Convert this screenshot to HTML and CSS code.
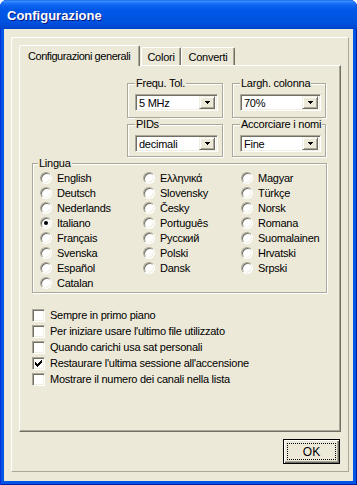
FILE: index.html
```html
<!DOCTYPE html>
<html lang="it">
<head>
<meta charset="utf-8">
<title>Configurazione</title>
<link rel="stylesheet" href="styles.css">
</head>
<body>
<div class="window">
  <div class="titlebar"><span class="title">Configurazione</span></div>
  <div class="client">
    <div class="outer">
      <div class="tabctl">
        <div class="tabstrip">
          <div class="tab active tab-general">Configurazioni generali</div>
          <div class="tab tab-colori">Colori</div>
          <div class="tab tab-converti">Converti</div>
        </div>
        <div class="tabpanel">
          <div class="settings">
            <fieldset class="group g-top">
              <legend>Frequ. Tol.</legend>
              <div class="combo"><span class="value">5 MHz</span><span class="drop"><svg width="5" height="3" viewBox="0 0 5 3"><rect x="0" y="0" width="5" height="1"/><rect x="1" y="1" width="3" height="1"/><rect x="2" y="2" width="1" height="1"/></svg></span></div>
            </fieldset>
            <fieldset class="group g-top">
              <legend>Largh. colonna</legend>
              <div class="combo"><span class="value">70%</span><span class="drop"><svg width="5" height="3" viewBox="0 0 5 3"><rect x="0" y="0" width="5" height="1"/><rect x="1" y="1" width="3" height="1"/><rect x="2" y="2" width="1" height="1"/></svg></span></div>
            </fieldset>
            <fieldset class="group g-bottom">
              <legend>PIDs</legend>
              <div class="combo"><span class="value">decimali</span><span class="drop"><svg width="5" height="3" viewBox="0 0 5 3"><rect x="0" y="0" width="5" height="1"/><rect x="1" y="1" width="3" height="1"/><rect x="2" y="2" width="1" height="1"/></svg></span></div>
            </fieldset>
            <fieldset class="group g-bottom">
              <legend>Accorciare i nomi</legend>
              <div class="combo"><span class="value">Fine</span><span class="drop"><svg width="5" height="3" viewBox="0 0 5 3"><rect x="0" y="0" width="5" height="1"/><rect x="1" y="1" width="3" height="1"/><rect x="2" y="2" width="1" height="1"/></svg></span></div>
            </fieldset>
          </div>

          <fieldset class="group lingua">
            <legend>Lingua</legend>
            <div class="radios">
              <label class="opt"><span class="radio"></span>English</label>
              <label class="opt"><span class="radio"></span>Ελληνικά</label>
              <label class="opt"><span class="radio"></span>Magyar</label>
              <label class="opt"><span class="radio"></span>Deutsch</label>
              <label class="opt"><span class="radio"></span>Slovensky</label>
              <label class="opt"><span class="radio"></span>Türkçe</label>
              <label class="opt"><span class="radio"></span>Nederlands</label>
              <label class="opt"><span class="radio"></span>Česky</label>
              <label class="opt"><span class="radio"></span>Norsk</label>
              <label class="opt"><span class="radio checked"></span>Italiano</label>
              <label class="opt"><span class="radio"></span>Português</label>
              <label class="opt"><span class="radio"></span>Romana</label>
              <label class="opt"><span class="radio"></span>Français</label>
              <label class="opt"><span class="radio"></span>Русский</label>
              <label class="opt"><span class="radio"></span>Suomalainen</label>
              <label class="opt"><span class="radio"></span>Svenska</label>
              <label class="opt"><span class="radio"></span>Polski</label>
              <label class="opt"><span class="radio"></span>Hrvatski</label>
              <label class="opt"><span class="radio"></span>Español</label>
              <label class="opt"><span class="radio"></span>Dansk</label>
              <label class="opt"><span class="radio"></span>Srpski</label>
              <label class="opt"><span class="radio"></span>Catalan</label>
            </div>
          </fieldset>

          <div class="checks">
            <label class="chk"><span class="box"></span>Sempre in primo piano</label>
            <label class="chk"><span class="box"></span>Per iniziare usare l'ultimo file utilizzato</label>
            <label class="chk"><span class="box"></span>Quando carichi usa sat personali</label>
            <label class="chk"><span class="box"><svg width="7" height="7" viewBox="0 0 7 7"><path d="M0 2h1v1h1v1h1v-1h1v-1h1v-1h1v-1h1v3h-1v1h-1v1h-1v1h-1v1h-1v-1h-1v-1h-1v-1h-1z"/></svg></span>Restaurare l'ultima sessione all'accensione</label>
            <label class="chk"><span class="box"></span>Mostrare il numero dei canali nella lista</label>
          </div>
        </div>
      </div>
      <div class="buttons">
        <button class="btn default" type="button"><span class="focus">OK</span></button>
      </div>
    </div>
  </div>
</div>
</body>
</html>
```

FILE: styles.css
```css
* { box-sizing: border-box; }

html, body {
  margin: 0;
  padding: 0;
  background: #ffffff;
}

body {
  width: 357px;
  height: 485px;
  overflow: hidden;
  font-family: "Liberation Sans", Arial, sans-serif;
  font-size: 11px;
  letter-spacing: -0.25px;
  color: #000;
}

.window {
  width: 357px;
  height: 485px;
  display: flex;
  flex-direction: column;
  background: #0055e5;
  border-radius: 7px 7px 0 0;
  box-shadow: inset 1px 0 0 #0831d9, inset -1px 0 0 #001ea0, inset 0 -1px 0 #001ea0;
}

.titlebar {
  height: 29px;
  flex: none;
  display: flex;
  align-items: center;
  padding: 2px 0 0 7px;
  border-radius: 7px 7px 0 0;
  background: linear-gradient(to bottom,
    #0a5de8 0px, #3d95ff 1px, #1c75fb 3px, #0b61ef 6px, #0058e8 10px,
    #0055e3 16px, #0052df 22px, #004bd8 26px, #0041c8 29px);
}

.title {
  font-family: "Liberation Sans", Arial, sans-serif;
  font-weight: bold;
  font-size: 13px;
  letter-spacing: 0;
  color: #fff;
  text-shadow: 1px 1px 0 #0a1883;
}

.client {
  flex: 1;
  margin: 0 4px 4px 4px;
  background: #ece9d8;
  padding: 8px 4px 9px 7px;
  display: flex;
}

.outer {
  flex: 1;
  border: 1px solid;
  border-color: #fff #aca899 #aca899 #fff;
  padding: 7px 7px 7px 7px;
  display: flex;
  flex-direction: column;
}

.tabctl {
  display: flex;
  flex-direction: column;
}

.tabstrip {
  display: flex;
  align-items: flex-end;
  height: 20px;
}

.tab {
  height: 18px;
  border: 1px solid;
  border-bottom: none;
  border-color: #fff #716f64 transparent #fff;
  box-shadow: inset -1px 0 0 #aca899;
  border-radius: 2px 2px 0 0;
  background: #ece9d8;
  display: flex;
  align-items: center;
  justify-content: center;
  padding-top: 1px;
}

.tab.active {
  height: 21px;
  margin-bottom: -1px;
  position: relative;
  z-index: 1;
  justify-content: flex-start;
  padding-left: 8px;
  padding-top: 0;
  letter-spacing: -0.45px;
}

.tab-general { width: 121px; }
.tab-colori { width: 40px; margin-left: 1px; }
.tab-converti { width: 54px; }

.tabpanel {
  height: 367px;
  border: 1px solid;
  border-color: #fff #716f64 #716f64 #fff;
  box-shadow: inset -1px -1px 0 #aca899;
  display: flex;
  flex-direction: column;
}

.group {
  margin: 0;
  padding: 0;
  min-width: 0;
  border: 1px solid #aca899;
  box-shadow: 1px 1px 0 #fff, inset 1px 1px 0 #fff;
}

.group legend {
  padding: 0 1px;
  margin-left: 0;
  line-height: 12px;
  white-space: nowrap;
  background: #ece9d8;
}

.settings {
  margin: 11px 0 0 107px;
  display: grid;
  grid-template-columns: 96px 94px;
  column-gap: 9px;
  row-gap: 0;
}

.g-top {
  padding: 5px 4px 6px 7px;
}

.g-bottom {
  padding: 5px 4px 4px 7px;
}

.combo {
  height: 17px;
  background: #fff;
  border: 1px solid;
  border-color: #aca899 #fff #fff #aca899;
  box-shadow: inset 1px 1px 0 #716f64, inset -1px -1px 0 #f1efe2;
  display: flex;
  align-items: center;
  padding: 2px 2px 2px 3px;
}

.combo .value {
  flex: 1;
  padding-top: 1px;
}

.drop {
  width: 16px;
  height: 13px;
  background: #ece9d8;
  border: 1px solid;
  border-color: #f1efe2 #716f64 #716f64 #f1efe2;
  box-shadow: inset 1px 1px 0 #fff, inset -1px -1px 0 #aca899;
  display: flex;
  align-items: center;
  justify-content: center;
}

.drop svg { display: block; fill: #000; }

.lingua {
  margin: 0 12px 0 12px;
  width: 295px;
  padding: 1px 0 2px 7px;
}

.lingua legend {
  margin-left: -2px;
}

.radios {
  display: grid;
  grid-template-columns: 103px 98px 1fr;
  grid-auto-rows: 15px;
}

.opt {
  display: flex;
  align-items: center;
  gap: 5px;
  white-space: nowrap;
}

.radio {
  width: 12px;
  height: 12px;
  flex: none;
  border-radius: 50%;
  background: #fff;
  border: 1px solid;
  border-color: #aca899 #fff #fff #aca899;
  box-shadow: inset 1px 1px 0 #716f64, inset -1px -1px 0 #f1efe2;
  display: flex;
  align-items: center;
  justify-content: center;
}

.radio.checked::after {
  content: "";
  width: 4px;
  height: 4px;
  border-radius: 50%;
  background: #000;
}

.checks {
  margin: 14px 0 0 12px;
  display: flex;
  flex-direction: column;
}

.chk {
  height: 16px;
  display: flex;
  align-items: center;
  gap: 5px;
  white-space: nowrap;
}

.box {
  width: 13px;
  height: 13px;
  flex: none;
  background: #fff;
  border: 1px solid;
  border-color: #aca899 #fff #fff #aca899;
  box-shadow: inset 1px 1px 0 #716f64, inset -1px -1px 0 #f1efe2;
  display: flex;
  align-items: center;
  justify-content: center;
}

.box svg { display: block; fill: #000; }

.buttons {
  margin-top: 7px;
  display: flex;
  justify-content: flex-end;
  padding-right: 1px;
}

.btn {
  width: 57px;
  height: 25px;
  padding: 0;
  margin: 0;
  font: inherit;
  letter-spacing: 0;
  color: #000;
  background: #ece9d8;
  border: 1px solid #000;
  box-shadow: inset 1px 1px 0 #fff, inset -1px -1px 0 #716f64, inset -2px -2px 0 #aca899;
  display: flex;
  border-radius: 0;
}

.btn .focus {
  flex: 1;
  margin: 3px;
  border: 1px dotted #000;
  display: flex;
  align-items: center;
  justify-content: center;
  font-size: 12px;
}
```
